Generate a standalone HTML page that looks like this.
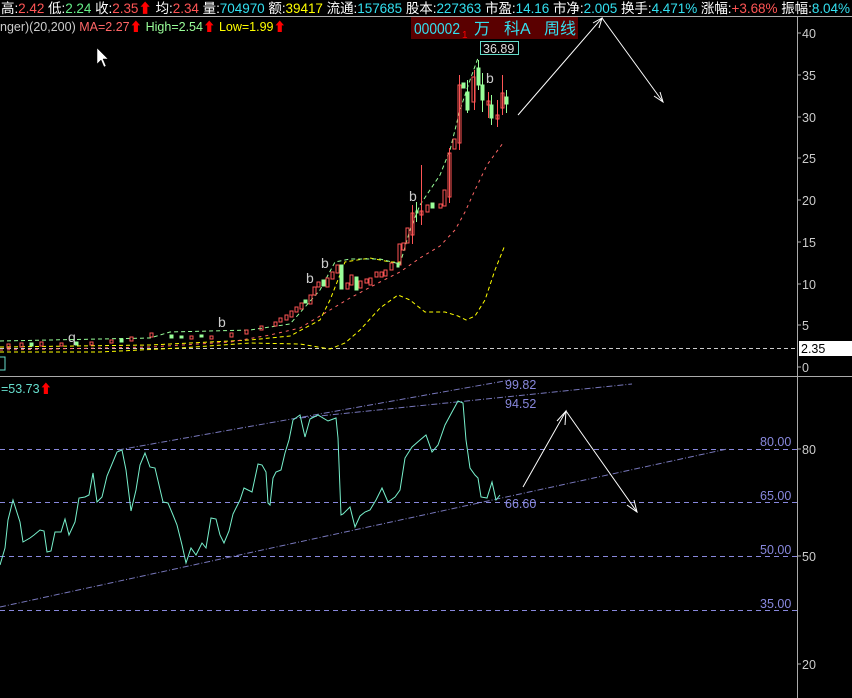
<!DOCTYPE html>
<html><head><meta charset="utf-8"><style>
html,body{margin:0;padding:0;background:#000;width:852px;height:698px;overflow:hidden}
svg{display:block}
text{font-family:"Liberation Sans","Noto Sans CJK SC",sans-serif}
</style></head><body>
<svg width="852" height="698" viewBox="0 0 852 698" xmlns="http://www.w3.org/2000/svg" font-size="12.5">
<rect width="852" height="698" fill="#000"/>
<!-- top info bar -->
<text x="1" y="13" fill="#fff" style="font-size:13.5px" textLength="849" lengthAdjust="spacing">高:<tspan fill="#ff5555">2.42</tspan> 低:<tspan fill="#66ee88">2.24</tspan> 收:<tspan fill="#ff5555">2.35</tspan><tspan fill="#ff0000">⬆</tspan> 均:<tspan fill="#ff5555">2.34</tspan> 量:<tspan fill="#33e0f0">704970</tspan> 额:<tspan fill="#ffff00">39417</tspan> 流通:<tspan fill="#33e0f0">157685</tspan> 股本:<tspan fill="#33e0f0">227363</tspan> 市盈:<tspan fill="#33e0f0">14.16</tspan> 市净:<tspan fill="#33e0f0">2.005</tspan> 换手:<tspan fill="#33e0f0">4.471%</tspan> 涨幅:<tspan fill="#ff5555">+3.68%</tspan> 振幅:<tspan fill="#33e0f0">8.04%</tspan></text>
<line x1="0" y1="16.5" x2="852" y2="16.5" stroke="#aaa"/>
<text x="0" y="31" fill="#ccc">nger)(20,200) <tspan fill="#ff6666">MA=2.27</tspan><tspan fill="#ff0000">⬆</tspan> <tspan fill="#99ff99">High=2.54</tspan><tspan fill="#ff0000">⬆</tspan> <tspan fill="#ffff00">Low=1.99</tspan><tspan fill="#ff0000">⬆</tspan></text>
<rect x="411" y="17" width="167" height="22" fill="#5a0000"/>
<g fill="#33e0f0" style="font-size:16px">
<text x="414" y="34" textLength="46" lengthAdjust="spacingAndGlyphs">000002</text>
<text x="474" y="34">万</text>
<text x="504" y="34">科A</text>
<text x="544" y="34">周线</text>
</g>
<text x="462" y="38" fill="#ff0000" style="font-size:10px">1</text>
<!-- axes -->
<line x1="797.5" y1="17" x2="797.5" y2="698" stroke="#aaa"/>
<line x1="0" y1="376.5" x2="852" y2="376.5" stroke="#aaa"/>
<g stroke="#aaa">
<line x1="797" y1="33" x2="801" y2="33"/><line x1="797" y1="75" x2="801" y2="75"/><line x1="797" y1="117" x2="801" y2="117"/><line x1="797" y1="158" x2="801" y2="158"/><line x1="797" y1="200" x2="801" y2="200"/><line x1="797" y1="242" x2="801" y2="242"/><line x1="797" y1="284" x2="801" y2="284"/><line x1="797" y1="325" x2="801" y2="325"/><line x1="797" y1="367" x2="801" y2="367"/>
<line x1="797" y1="449" x2="801" y2="449"/><line x1="797" y1="556" x2="801" y2="556"/><line x1="797" y1="664" x2="801" y2="664"/>
</g>
<g fill="#ccc">
<text x="802" y="38">40</text><text x="802" y="80">35</text><text x="802" y="122">30</text><text x="802" y="163">25</text><text x="802" y="205">20</text><text x="802" y="247">15</text><text x="802" y="289">10</text><text x="802" y="330">5</text><text x="802" y="372">0</text>
<text x="802" y="454">80</text><text x="802" y="561">50</text><text x="802" y="669">20</text>
</g>
<line x1="0" y1="348.5" x2="797" y2="348.5" stroke="#ccc" stroke-dasharray="4,3"/>
<rect x="799" y="341" width="53" height="15" fill="#fff"/>
<text x="801" y="353" fill="#000">2.35</text>
<rect x="-2" y="357" width="7" height="13" fill="none" stroke="#66ddcc"/>
<!-- bands -->
<polyline fill="none" stroke="#ffff00" stroke-dasharray="4,3" points="0,352 100,352 180,348 250,343 300,344 330,349 345,343 360,330 380,308 398,295 410,300 425,312 445,312 458,316 466,320 475,316 485,300 495,270 505,245"/>
<polyline fill="none" stroke="#ffff00" stroke-dasharray="4,3" points="0,347 150,345 250,340 290,336 320,320 330,300 345,262 370,258 390,262 400,262"/>
<polyline fill="none" stroke="#99ff99" stroke-dasharray="4,3" points="0,341 150,338 170,332 250,330 290,324 320,290 335,262 350,259 380,259 400,264 410,230 420,205 440,175 450,150 460,110 470,80 478,58"/>
<polyline fill="none" stroke="#ff6666" stroke-dasharray="3,4" points="0,350 150,347 230,342 270,335 300,328 330,310 350,298 380,282 400,272 420,258 440,246 455,230 465,212 475,190 487,165 503,143"/>
<!-- candles -->
<g stroke-width="1">
<g stroke="#ff5555" fill="none">
<rect x="7" y="344" width="3" height="4"/><rect x="20" y="343" width="3" height="4"/><rect x="40" y="342" width="3" height="4"/><rect x="60" y="343" width="3" height="3"/><rect x="90" y="342" width="3" height="3"/><rect x="110" y="340" width="3" height="3"/><rect x="130" y="337" width="3" height="4"/><rect x="150" y="333" width="3" height="4"/><rect x="190" y="336" width="3" height="3"/><rect x="210" y="336" width="3" height="3"/><rect x="230" y="333" width="3" height="4"/><rect x="245" y="330" width="3" height="4"/><rect x="260" y="326" width="3" height="4"/>
<rect x="274" y="322" width="3" height="4"/><rect x="279" y="318" width="3" height="4"/><rect x="285" y="315" width="3" height="5"/><rect x="290" y="311" width="3" height="6"/><rect x="295" y="307" width="3" height="5"/><rect x="300" y="303" width="3" height="6"/><rect x="309" y="295" width="3" height="9"/><rect x="313" y="287" width="3" height="8"/><rect x="317" y="282" width="3" height="5"/><rect x="326" y="278" width="3" height="9"/><rect x="331" y="272" width="3" height="7"/><rect x="336" y="265" width="3" height="8"/><rect x="346" y="283" width="3" height="6"/><rect x="350" y="275" width="3" height="10"/><rect x="359" y="281" width="3" height="7"/><rect x="365" y="279" width="3" height="4"/><rect x="369" y="278" width="3" height="7"/><rect x="375" y="272" width="3" height="5"/><rect x="380" y="272" width="3" height="5"/><rect x="384" y="270" width="3" height="6"/><rect x="390" y="263" width="3" height="7"/><rect x="398" y="244" width="3" height="21"/><rect x="402" y="243" width="3" height="7"/><rect x="406" y="228" width="3" height="15"/><rect x="411" y="213" width="3" height="22"/><rect x="420" y="211" width="3" height="4"/><rect x="426" y="205" width="3" height="7"/><rect x="439" y="204" width="3" height="4"/><rect x="443" y="190" width="3" height="16"/><rect x="448" y="153" width="3" height="44"/><rect x="453" y="139" width="3" height="10"/><rect x="458" y="85" width="3" height="58"/><rect x="472" y="77" width="3" height="25"/><rect x="487" y="101" width="3" height="4"/><rect x="496" y="115" width="3" height="4"/><rect x="501" y="93" width="3" height="15"/>
</g>
<g stroke="#ff5555"><line x1="421.5" y1="165" x2="421.5" y2="225"/><line x1="459.5" y1="75" x2="459.5" y2="150"/><line x1="474.5" y1="70" x2="474.5" y2="110"/><line x1="488.5" y1="92" x2="488.5" y2="118"/><line x1="497.5" y1="100" x2="497.5" y2="127"/><line x1="502.5" y1="75" x2="502.5" y2="115"/><line x1="449.5" y1="148" x2="449.5" y2="203"/><line x1="412.5" y1="205" x2="412.5" y2="244"/></g>
<g fill="#99ff99" stroke="#99ff99">
<rect x="30" y="343" width="3" height="3"/><rect x="75" y="342" width="3" height="3"/><rect x="120" y="339" width="3" height="3"/><rect x="170" y="335" width="3" height="3"/><rect x="180" y="336" width="3" height="2"/><rect x="200" y="335" width="3" height="2"/>
<rect x="304" y="300" width="3" height="3"/><rect x="322" y="280" width="3" height="6"/><rect x="340" y="265" width="3" height="24"/><rect x="355" y="277" width="3" height="13"/><rect x="397" y="263" width="2" height="4"/><rect x="416" y="211" width="2" height="2"/><rect x="431" y="203" width="3" height="5"/><rect x="462" y="83" width="3" height="5"/><rect x="466" y="92" width="3" height="18"/><rect x="477" y="68" width="3" height="17"/><rect x="481" y="85" width="3" height="15"/><rect x="490" y="105" width="3" height="13"/><rect x="505" y="97" width="3" height="7"/>
</g>
<g stroke="#99ff99"><line x1="467.5" y1="80" x2="467.5" y2="113"/><line x1="478.5" y1="60" x2="478.5" y2="90"/><line x1="482.5" y1="73" x2="482.5" y2="112"/><line x1="491.5" y1="95" x2="491.5" y2="125"/><line x1="506.5" y1="90" x2="506.5" y2="113"/><line x1="416.5" y1="202" x2="416.5" y2="222"/></g>
</g>
<g fill="#ccc" style="font-size:14px"><text x="68" y="342">q</text><text x="218" y="327">b</text><text x="306" y="283">b</text><text x="321" y="268">b</text><text x="409" y="201">b</text><text x="486" y="83">b</text></g>
<rect x="480.5" y="41.5" width="38" height="13" fill="#000" stroke="#66ddcc"/>
<text x="483" y="53" fill="#ddd">36.89</text>
<!-- arrows top -->
<g stroke="#fff" fill="none" stroke-width="1">
<polyline points="518,115 602,18 663,102"/>
<polyline points="593,23 602,18 599,28"/>
<polyline points="654,96 663,102 660,92"/>
</g>
<!-- lower panel -->
<text x="1" y="393" fill="#66ddcc">=53.73<tspan fill="#ff0000">⬆</tspan></text>
<g stroke="#8888dd" stroke-dasharray="5,4">
<line x1="0" y1="449.5" x2="797" y2="449.5"/><line x1="0" y1="502.5" x2="797" y2="502.5"/><line x1="0" y1="556.5" x2="797" y2="556.5"/><line x1="0" y1="610.5" x2="797" y2="610.5"/>
</g>
<g stroke="#7777bb" stroke-dasharray="6,2,1,2">
<line x1="0" y1="607" x2="727" y2="449"/>
<line x1="118" y1="450" x2="510" y2="380"/>
<line x1="300" y1="418" x2="632" y2="384"/>
</g>
<g fill="#8888dd"><text x="505" y="389">99.82</text><text x="505" y="408">94.52</text><text x="505" y="508">66.60</text><text x="760" y="446">80.00</text><text x="760" y="500">65.00</text><text x="760" y="554">50.00</text><text x="760" y="608">35.00</text></g>
<polyline fill="none" stroke="#77f0cc" points="0,565 5,548 8,520 13,500 20,522 23,542 30,538 34,535 40,530 44,531 47,552 51,551 55,532 61,532 65,519 69,535 75,522 79,498 85,497 89,495 93,473 97,502 102,497 107,476 117,452 122,450 126,470 131,511 136,490 140,465 145,453 150,467 155,468 163,502 168,503 173,515 177,525 182,545 186,563 191,548 196,555 202,543 206,548 211,518 216,519 220,535 224,543 229,531 233,514 240,500 244,488 252,492 258,464 262,465 266,472 268,503 270,505 273,478 276,472 281,470 285,453 289,440 293,420 300,415 305,437 310,419 318,415 328,421 336,418 338,438 341,515 343,514 350,507 355,527 360,516 365,512 370,510 376,500 382,488 388,502 395,497 400,490 405,458 412,447 420,440 426,435 432,452 438,445 445,425 452,412 458,401 463,403 466,440 470,468 475,475 478,478 481,497 487,498 492,482 496,500 500,495"/>
<g stroke="#fff" fill="none">
<polyline points="523,487 566,411 637,512"/>
<polyline points="557,421 566,411 565,425"/>
<polyline points="627,505 637,512 634,500"/>
</g>
<polygon points="97,48 97,64 101,60 104,67 106,66 103,59 108,59" fill="#fff" stroke="#000" stroke-width="0.5"/>
</svg>
</body></html>
